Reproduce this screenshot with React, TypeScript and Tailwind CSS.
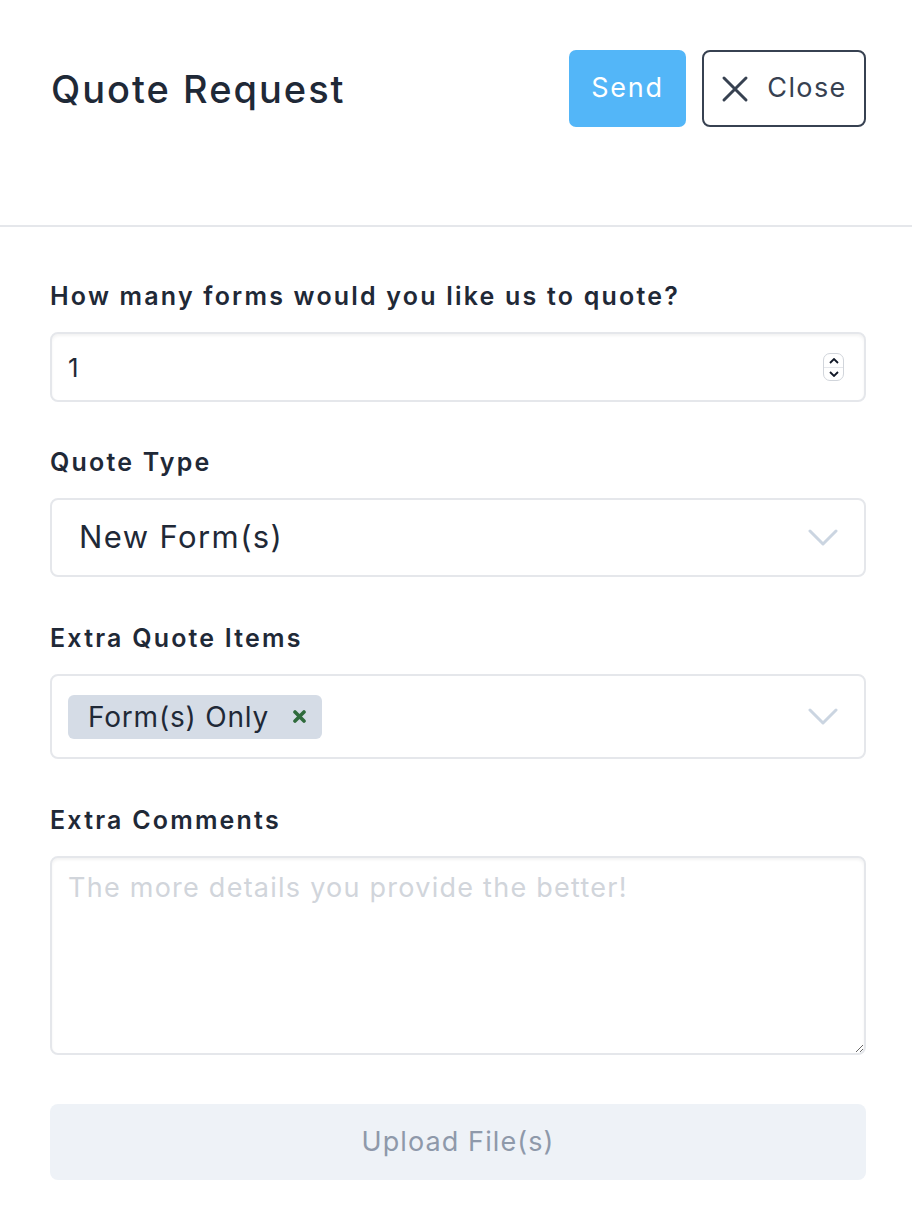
import React from 'react';

const font = { fontFamily: 'Inter, "Noto Sans", sans-serif' };

function Label({ children }: { children: React.ReactNode }) {
  return (
    <div className="text-[25px] font-semibold tracking-[2.2px] text-[#1f2937] leading-none mb-[23px]">
      {children}
    </div>
  );
}

function Chevron() {
  return (
    <svg width="30" height="20" viewBox="0 0 30 20" fill="none">
      <path d="M2 3 L15 16 L28 3" stroke="#cbd5e1" strokeWidth="3" strokeLinecap="round" strokeLinejoin="round" />
    </svg>
  );
}

export default function App() {
  return (
    <div className="w-[912px] h-[1224px] bg-white" style={font}>
      <div className="flex items-center justify-between pl-[51px] pr-[46px] pt-[50px] pb-[98px] border-b-2 border-[#e5e7eb]">
        <h1 className="text-[38px] font-medium tracking-[2px] text-[#1f2937] leading-none">Quote Request</h1>
        <div className="flex items-center gap-[16px]">
          <button className="h-[77px] w-[117px] rounded-[7px] bg-[#53b6f8] text-white text-[27px] tracking-[1.8px]">
            Send
          </button>
          <button className="h-[77px] w-[164px] rounded-[8px] border-2 border-[#374151] flex items-center justify-center gap-[18px] text-[27px] tracking-[1.4px] text-[#374151]">
            <svg width="28" height="28" viewBox="0 0 28 28" fill="none">
              <path d="M3 3 L25 25 M25 3 L3 25" stroke="#374151" strokeWidth="3" strokeLinecap="round" />
            </svg>
            <span>Close</span>
          </button>
        </div>
      </div>

      <div className="pl-[50px] pr-[46px] pt-[57px] flex flex-col">
        <Label>How many forms would you like us to quote?</Label>
        <div className="h-[70px] rounded-[8px] border-2 border-[#e5e7eb] shadow-[inset_0_2px_3px_rgba(0,0,0,0.05)] flex items-center justify-between pl-[16px] pr-[20px] text-[26px] text-[#1f2937]">
          <span>1</span>
          <div className="w-[21px] h-[28px] rounded-[7px] border border-[#d1d5db] flex flex-col items-center justify-center gap-[3px]">
            <svg width="10" height="6" viewBox="0 0 10 6"><path d="M1 5 L5 1 L9 5" stroke="#111827" strokeWidth="1.8" fill="none" /></svg>
            <div className="w-full h-px bg-[#e5e7eb]" />
            <svg width="10" height="6" viewBox="0 0 10 6"><path d="M1 1 L5 5 L9 1" stroke="#111827" strokeWidth="1.8" fill="none" /></svg>
          </div>
        </div>

        <div className="mt-[48px]">
          <Label>Quote Type</Label>
        </div>
        <div className="h-[79px] rounded-[8px] border-2 border-[#e5e7eb] flex items-center justify-between pl-[27px] pr-[26px] text-[31px] tracking-[1.4px] text-[#1f2937]">
          <span>New Form(s)</span>
          <Chevron />
        </div>

        <div className="mt-[49px]">
          <Label>Extra Quote Items</Label>
        </div>
        <div className="h-[85px] rounded-[8px] border-2 border-[#e5e7eb] flex items-center justify-between pl-[16px] pr-[26px]">
          <div className="h-[44px] rounded-[6px] bg-[#d5dce6] flex items-center pl-[20px] pr-[16px] gap-[24px] text-[28px] tracking-[0.8px] text-[#1f2937]">
            <span>Form(s) Only</span>
            <svg width="13" height="13" viewBox="0 0 13 13"><path d="M2 2 L11 11 M11 2 L2 11" stroke="#2f6b3c" strokeWidth="3.6" strokeLinecap="round" /></svg>
          </div>
          <Chevron />
        </div>

        <div className="mt-[49px]">
          <Label>Extra Comments</Label>
        </div>
        <textarea
          placeholder="The more details you provide the better!"
          className="h-[199px] rounded-[8px] border-2 border-[#e5e7eb] shadow-[inset_0_2px_3px_rgba(0,0,0,0.05)] px-[16px] py-[10px] text-[27px] tracking-[1.25px] text-[#1f2937] placeholder:text-[#d1d5db] outline-none"
        />

        <button className="mt-[49px] h-[76px] rounded-[8px] bg-[#eef2f7] text-[27px] tracking-[1.1px] text-[#8e99aa]">
          Upload File(s)
        </button>
      </div>
    </div>
  );
}
